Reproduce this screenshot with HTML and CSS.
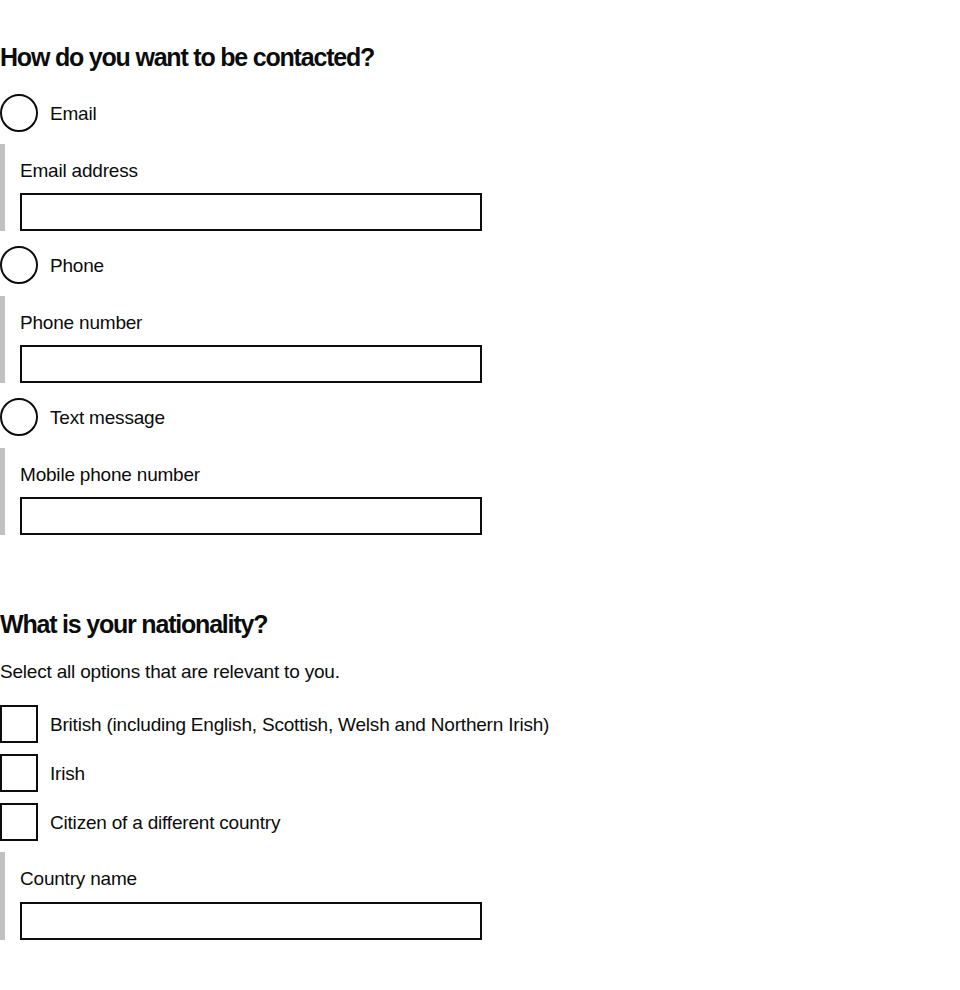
FILE: index.html
```html
<!DOCTYPE html>
<html lang="en">
<head>
<meta charset="utf-8">
<title>Contact and nationality</title>
<link rel="stylesheet" href="styles.css">
</head>
<body>
<main class="page">
  <form class="form">
    <fieldset class="fieldset">
      <legend class="legend">How do you want to be contacted?</legend>
      <div class="choices">
        <label class="choice">
          <input class="radio" type="radio" name="contact" value="email">
          <span class="choice-text">Email</span>
        </label>
        <div class="reveal">
          <label class="field-label" for="email">Email address</label>
          <input class="input" id="email" type="text">
        </div>
        <label class="choice choice--after-reveal">
          <input class="radio" type="radio" name="contact" value="phone">
          <span class="choice-text">Phone</span>
        </label>
        <div class="reveal">
          <label class="field-label" for="phone">Phone number</label>
          <input class="input" id="phone" type="text">
        </div>
        <label class="choice choice--after-reveal">
          <input class="radio" type="radio" name="contact" value="text">
          <span class="choice-text">Text message</span>
        </label>
        <div class="reveal">
          <label class="field-label" for="mobile">Mobile phone number</label>
          <input class="input" id="mobile" type="text">
        </div>
      </div>
    </fieldset>

    <fieldset class="fieldset fieldset--second">
      <legend class="legend">What is your nationality?</legend>
      <p class="hint">Select all options that are relevant to you.</p>
      <div class="choices choices--checks">
        <label class="choice">
          <input class="checkbox" type="checkbox" value="british">
          <span class="choice-text">British (including English, Scottish, Welsh and Northern Irish)</span>
        </label>
        <label class="choice">
          <input class="checkbox" type="checkbox" value="irish">
          <span class="choice-text">Irish</span>
        </label>
        <label class="choice">
          <input class="checkbox" type="checkbox" value="other">
          <span class="choice-text">Citizen of a different country</span>
        </label>
        <div class="reveal reveal--checks">
          <label class="field-label" for="country">Country name</label>
          <input class="input" id="country" type="text">
        </div>
      </div>
    </fieldset>
  </form>
</main>
</body>
</html>
```

FILE: styles.css
```css
html, body {
  margin: 0;
  padding: 0;
  background: #ffffff;
}

body {
  font-family: "Liberation Sans", Arial, sans-serif;
  color: #0b0c0c;
  font-size: 19px;
  line-height: 25px;
  letter-spacing: -0.2px;
}

.page {
  padding-top: 42px;
}

.form {
  margin: 0;
}

.fieldset {
  margin: 0;
  padding: 0;
  border: 0;
  min-width: 0;
}

.fieldset--second {
  margin-top: 74px;
}

.legend {
  padding: 0;
  font-size: 25px;
  line-height: 30px;
  font-weight: 700;
  letter-spacing: -1.2px;
}

.hint {
  margin: 20px 0 0;
}

.choices {
  display: flex;
  flex-direction: column;
  margin-top: 22px;
}

.choices--checks {
  margin-top: 21px;
  gap: 11px;
}

.choice {
  display: flex;
  align-items: center;
  gap: 12px;
  min-height: 38px;
  cursor: pointer;
}

.choice--after-reveal {
  margin-top: 15px;
}

.radio,
.checkbox {
  -webkit-appearance: none;
  appearance: none;
  flex: 0 0 auto;
  box-sizing: border-box;
  width: 38px;
  height: 38px;
  margin: 0;
  border: 2px solid #0b0c0c;
  background: #ffffff;
}

.radio {
  border-radius: 50%;
}

.checkbox {
  border-radius: 0;
}

.reveal {
  margin-top: 12px;
  border-left: 5px solid #bfc1c3;
  padding: 14px 0 0 15px;
}

.reveal--checks {
  margin-top: 0;
}

.field-label {
  display: block;
  margin-bottom: 10px;
}

.reveal--checks .field-label {
  margin-bottom: 11px;
}

.input {
  display: block;
  box-sizing: border-box;
  width: 462px;
  height: 38px;
  margin: 0;
  padding: 4px;
  border: 2px solid #0b0c0c;
  border-radius: 0;
  font-family: inherit;
  font-size: 19px;
  color: #0b0c0c;
  background: #ffffff;
}
```
